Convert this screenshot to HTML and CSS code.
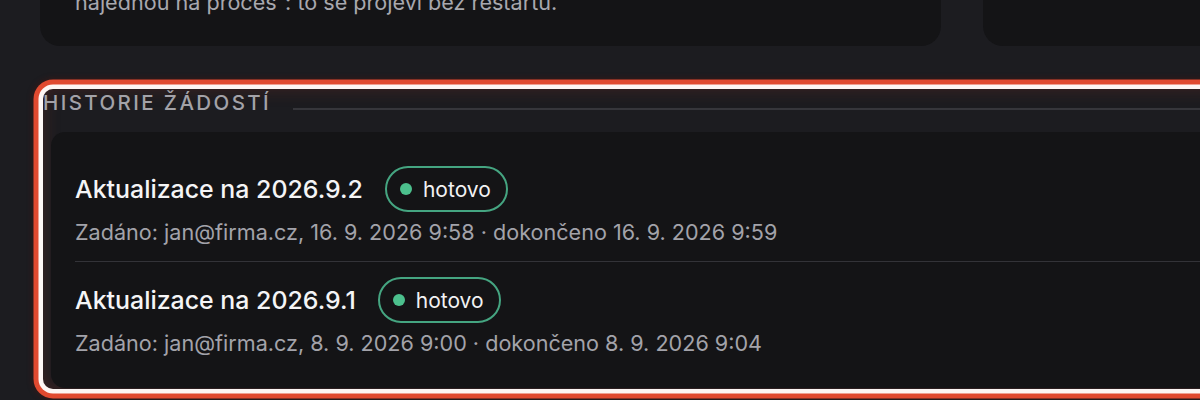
FILE: index.html
```html
<!DOCTYPE html>
<html lang="cs">
<head>
<meta charset="utf-8">
<title>Historie žádostí</title>
<link rel="stylesheet" href="styles.css">
</head>
<body>
<div class="page">
  <div class="top-row">
    <div class="card top-card">
      <p class="note">najednou na proces“: to se projeví bez restartu.</p>
    </div>
    <div class="card top-card"></div>
  </div>

  <section class="history">
    <div class="history-head">
      <h2>HISTORIE ŽÁDOSTÍ</h2>
      <div class="rule"></div>
    </div>
    <div class="card list">
      <div class="item">
        <div class="item-title">
          <span class="name">Aktualizace na 2026.9.2</span>
          <span class="badge"><span class="dot"></span>hotovo</span>
        </div>
        <div class="meta">Zadáno: jan@firma.cz, 16. 9. 2026 9:58 · dokončeno 16. 9. 2026 9:59</div>
      </div>
      <div class="item">
        <div class="item-title">
          <span class="name">Aktualizace na 2026.9.1</span>
          <span class="badge"><span class="dot"></span>hotovo</span>
        </div>
        <div class="meta">Zadáno: jan@firma.cz, 8. 9. 2026 9:00 · dokončeno 8. 9. 2026 9:04</div>
      </div>
    </div>
  </section>
</div>
</body>
</html>
```
FILE: styles.css
```css
html {
  overflow: hidden;
  background: #1c1c20;
}

body {
  margin: 0;
  padding: 0 0 40px;
  background: #1c1c20;
  font-family: Inter, "Noto Sans", sans-serif;
  color: #f2f2f3;
}

.page {
  width: 1400px;
  padding-left: 40px;
}

.top-row {
  display: grid;
  grid-template-columns: 901px 400px;
  column-gap: 42px;
  margin-top: -60px;
}

.card {
  background: #141416;
}

.top-card {
  border-radius: 20px;
  height: 106px;
  box-sizing: border-box;
  display: flex;
  align-items: flex-end;
  padding: 0 35px 30px;
}

.note {
  margin: 0;
  font-size: 21.6px;
  line-height: 28px;
  color: #a8a8ae;
}

.history {
  margin: 43px 0 0 3px;
  padding: 2px 0 0 0;
  height: 300px;
  box-sizing: border-box;
  border-radius: 10px;
  background: #1c1c20;
  box-shadow:
    inset 0 0 18px rgba(190, 60, 40, 0.22),
    0 0 0 4.5px #fdf6f4,
    0 0 0 9.5px #e04a30,
    0 0 6px 10px rgba(110, 20, 10, 0.35);
}

.history-head {
  display: flex;
  align-items: flex-end;
  gap: 22px;
}

.history-head h2 {
  margin: 0;
  font-size: 20.5px;
  line-height: 24px;
  font-weight: 500;
  letter-spacing: 2.4px;
  color: #a3a2a8;
}

.rule {
  flex: 1;
  height: 2px;
  margin-bottom: 5px;
  background: #36363b;
}

.list {
  margin: 17px 0 0 8px;
  padding: 19px 0 16px 24px;
  border-radius: 14px 0 0 14px;
  height: 256px;
  box-sizing: border-box;
}

.item {
  padding: 15px 0;
}

.item + .item {
  border-top: 1px solid #333338;
}

.item-title {
  display: flex;
  align-items: center;
  gap: 22px;
}

.name {
  font-size: 24.9px;
  font-weight: 500;
  color: #f5f5f6;
}

.badge {
  display: inline-flex;
  align-items: center;
  gap: 11px;
  height: 46px;
  box-sizing: border-box;
  padding: 0 15px 0 13px;
  border: 2px solid #45a581;
  border-radius: 999px;
  font-size: 21px;
  color: #f2f2f3;
}

.dot {
  width: 12px;
  height: 12px;
  border-radius: 50%;
  background: #4cc08d;
}

.meta {
  margin-top: 6px;
  font-size: 21.6px;
  line-height: 28px;
  color: #a3a3aa;
}
```
